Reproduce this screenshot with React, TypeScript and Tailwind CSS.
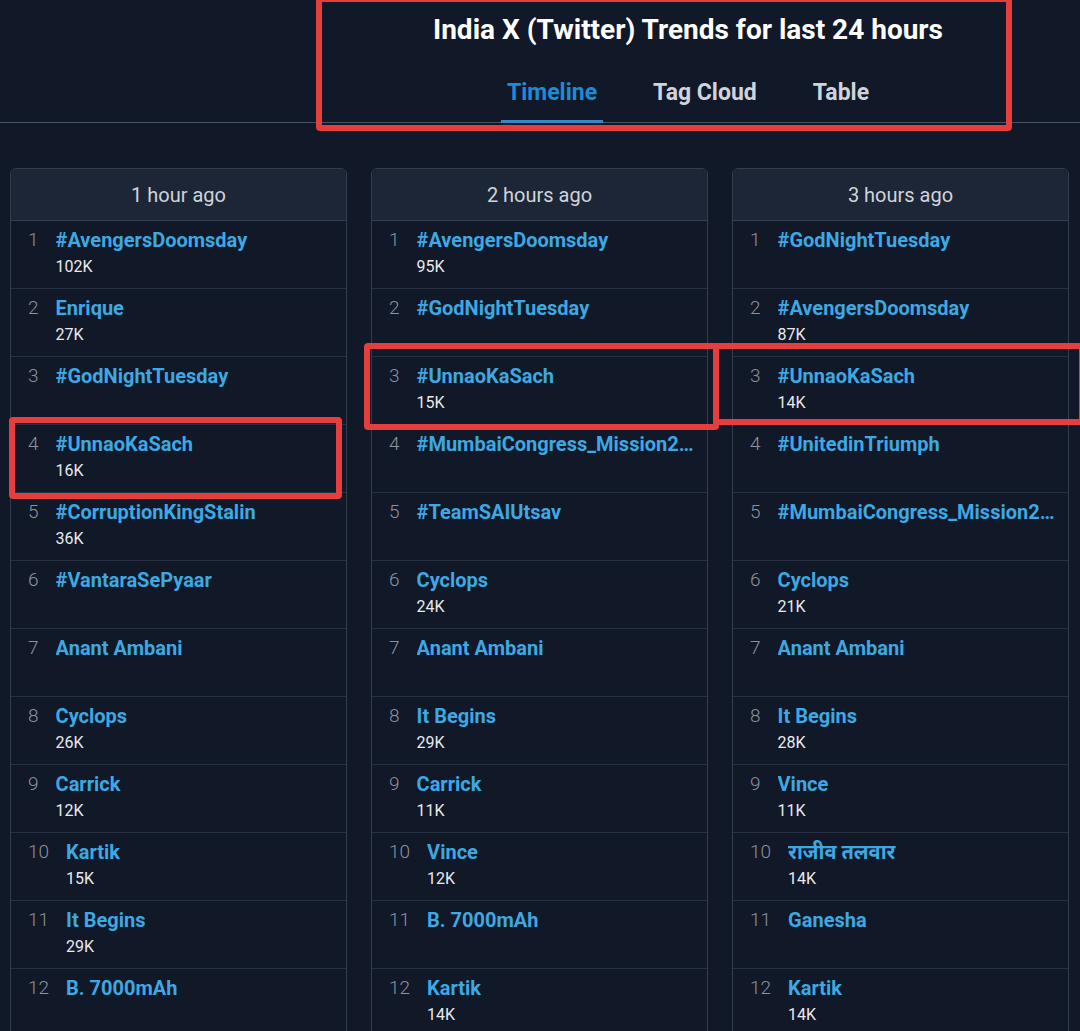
import React from 'react';

type Trend = { name: string; count?: string };

const COLUMNS: { label: string; trends: Trend[] }[] = [
  {
    label: '1 hour ago',
    trends: [
      { name: '#AvengersDoomsday', count: '102K' },
      { name: 'Enrique', count: '27K' },
      { name: '#GodNightTuesday' },
      { name: '#UnnaoKaSach', count: '16K' },
      { name: '#CorruptionKingStalin', count: '36K' },
      { name: '#VantaraSePyaar' },
      { name: 'Anant Ambani' },
      { name: 'Cyclops', count: '26K' },
      { name: 'Carrick', count: '12K' },
      { name: 'Kartik', count: '15K' },
      { name: 'It Begins', count: '29K' },
      { name: 'B. 7000mAh' },
    ],
  },
  {
    label: '2 hours ago',
    trends: [
      { name: '#AvengersDoomsday', count: '95K' },
      { name: '#GodNightTuesday' },
      { name: '#UnnaoKaSach', count: '15K' },
      { name: '#MumbaiCongress_Mission2026_BMC' },
      { name: '#TeamSAIUtsav' },
      { name: 'Cyclops', count: '24K' },
      { name: 'Anant Ambani' },
      { name: 'It Begins', count: '29K' },
      { name: 'Carrick', count: '11K' },
      { name: 'Vince', count: '12K' },
      { name: 'B. 7000mAh' },
      { name: 'Kartik', count: '14K' },
    ],
  },
  {
    label: '3 hours ago',
    trends: [
      { name: '#GodNightTuesday' },
      { name: '#AvengersDoomsday', count: '87K' },
      { name: '#UnnaoKaSach', count: '14K' },
      { name: '#UnitedinTriumph' },
      { name: '#MumbaiCongress_Mission2026_BMC' },
      { name: 'Cyclops', count: '21K' },
      { name: 'Anant Ambani' },
      { name: 'It Begins', count: '28K' },
      { name: 'Vince', count: '11K' },
      { name: 'राजीव तलवार', count: '14K' },
      { name: 'Ganesha' },
      { name: 'Kartik', count: '14K' },
    ],
  },
];

const TABS = ['Timeline', 'Tag Cloud', 'Table'];

function TrendRow({ rank, trend }: { rank: number; trend: Trend }) {
  return (
    <div className="h-[68px] flex items-start gap-[17px] pl-[17px] pr-[6px] pt-[7px] border-b border-[#283142]">
      <span className="text-[19px] leading-6 font-light text-[#8b93a1] shrink-0">{rank}</span>
      <div className="min-w-0 flex-1">
        <p className="text-[20px] leading-6 font-bold text-[#3ea8e2] truncate">{trend.name}</p>
        {trend.count && (
          <p className="text-[16px] leading-5 text-[#e8eaee] mt-[5px]">{trend.count}</p>
        )}
      </div>
    </div>
  );
}

function TrendColumn({ label, trends }: { label: string; trends: Trend[] }) {
  return (
    <div className="w-[337px] shrink-0 border border-[#343d4d] rounded-md overflow-hidden">
      <div className="h-[52px] flex items-center justify-center bg-[#1d2636] border-b border-[#343d4d]">
        <span className="text-[20px] text-[#cfd4dc]">{label}</span>
      </div>
      {trends.map((t, i) => (
        <TrendRow key={i} rank={i + 1} trend={t} />
      ))}
    </div>
  );
}

export default function App() {
  return (
    <div
      className="relative w-[1080px] h-[1031px] overflow-hidden bg-[#111827]"
      style={{ fontFamily: 'Roboto, "Noto Sans", "Liberation Sans", sans-serif' }}
    >
      {/* ── Header ───────────────────────────────────────────── */}
      <div className="border-b border-[#4a5363] pl-[296px]">
        <div className="flex flex-col items-center">
          <h1 className="text-[28px] font-bold text-white leading-9 pt-[12px]">
            India X (Twitter) Trends for last 24 hours
          </h1>
          <div className="flex gap-[44px] mt-[31px] -mb-px">
            {TABS.map((t, i) => (
              <div
                key={t}
                className={`px-[6px] pb-[13px] text-[23px] leading-7 font-bold border-b-[3px] ${
                  i === 0 ? 'text-[#1b8cd8] border-[#3a87c8]' : 'text-[#cfd4dc] border-transparent'
                }`}
              >
                {t}
              </div>
            ))}
          </div>
        </div>
      </div>

      {/* ── Columns ──────────────────────────────────────────── */}
      <div className="flex gap-[24px] pl-[10px] pt-[45px]">
        {COLUMNS.map((c) => (
          <TrendColumn key={c.label} label={c.label} trends={c.trends} />
        ))}
      </div>

      {/* annotation boxes */}
      <div className="absolute left-[316px] top-[-4px] w-[696px] h-[135px] border-[6px] border-[#e53e3e] rounded-[4px]" />
      <div className="absolute left-[9px] top-[417px] w-[333px] h-[82px] border-[6px] border-[#e53e3e] rounded-[4px]" />
      <div className="absolute left-[364px] top-[343px] w-[355px] h-[87px] border-[6px] border-[#e53e3e] rounded-[4px]" />
      <div className="absolute left-[713px] top-[343px] w-[372px] h-[82px] border-[6px] border-[#e53e3e] rounded-[4px]" />
    </div>
  );
}
